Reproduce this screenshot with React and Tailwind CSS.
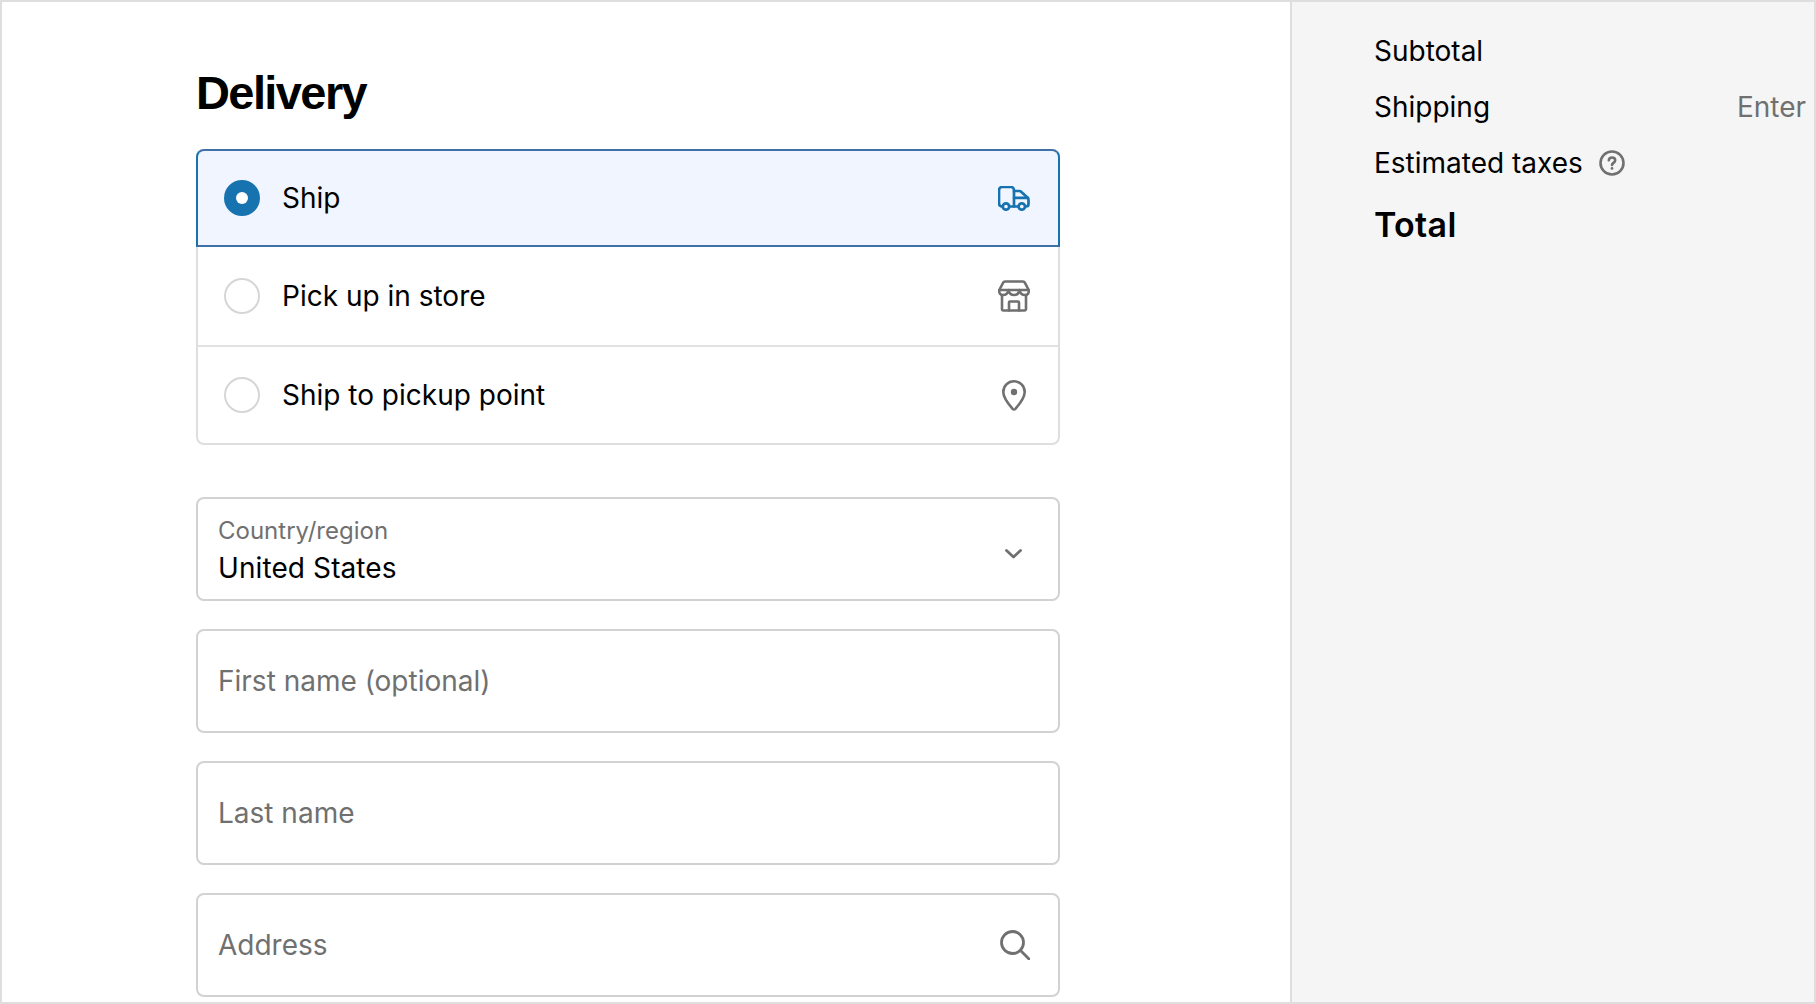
const FONT = "font-['Inter','Liberation_Sans',sans-serif]";

function Truck() {
  return (
    <svg width="32" height="25" viewBox="0 0 32 25" fill="none" stroke="#1773b0" strokeWidth="2.7" strokeLinecap="round" strokeLinejoin="round">
      <path d="M4.8 20.5H4a3 3 0 0 1-3-3V4a3 3 0 0 1 3-3h9a3 3 0 0 1 3 3v16.5h-4.8" />
      <path d="M16 5h5.2a3 3 0 0 1 2.2 1l6 5.6a3 3 0 0 1 1.1 2.3V18a2.5 2.5 0 0 1-2.5 2.5" />
      <path d="M16 20.5h4.5M16 11.8h14" />
      <circle cx="8" cy="20.5" r="3.2" />
      <circle cx="23.8" cy="20.5" r="3.2" />
    </svg>
  );
}

function Store() {
  return (
    <svg width="32" height="32" viewBox="0 0 32 32" fill="none" stroke="#707070" strokeWidth="2.6" strokeLinecap="round" strokeLinejoin="round">
      <path d="M7 1.5H25a2 2 0 0 1 1.800 1.100L30.700 10c.5 3-1 5-3.700 5-2.800 0-5-2-5.500-5-.5 3-2.700 5-5.500 5s-5-2-5.500-5c-.5 3-2.700 5-5.500 5-2.700 0-4.200-2-3.700-5L5.200 2.600A2 2 0 0 1 7 1.500Z" />
      <path d="M1.500 10h29" />
      <path d="M4 15.500V29a1.500 1.500 0 0 0 1.500 1.500h21A1.500 1.500 0 0 0 28 29V15.500" />
      <path d="M11 30.500V22.500a1 1 0 0 1 1-1h8a1 1 0 0 1 1 1v8" />
    </svg>
  );
}

function Pin() {
  return (
    <svg width="24" height="31" viewBox="0 0 24 31" fill="none" stroke="#707070" strokeWidth="2.6" strokeLinejoin="round">
      <path d="M12 1.3C6 1.3 1.3 6 1.3 12c0 6.2 5.6 12.6 9.3 16.9a1.9 1.9 0 0 0 2.8 0C17.1 24.6 22.7 18.2 22.7 12 22.7 6 18 1.3 12 1.3Z" />
      <circle cx="12" cy="12" r="3.2" fill="#707070" stroke="none" />
    </svg>
  );
}

function Chevron() {
  return (
    <svg width="17" height="10" viewBox="0 0 17 10" fill="none" stroke="#707070" strokeWidth="2.8" strokeLinecap="round" strokeLinejoin="round">
      <path d="M1.5 1.5 8.5 8l7-6.5" />
    </svg>
  );
}

function Search() {
  return (
    <svg width="30" height="30" viewBox="0 0 30 30" fill="none" stroke="#707070" strokeWidth="2.8" strokeLinecap="round">
      <circle cx="12.5" cy="12.5" r="11" />
      <path d="m21 21 8 8" />
    </svg>
  );
}

function Help() {
  return (
    <svg width="26" height="26" viewBox="0 0 26 26" fill="none" stroke="#707070" strokeWidth="2.6" strokeLinecap="round">
      <circle cx="13" cy="13" r="11.5" />
      <path d="M9.8 10.3c.2-1.8 1.5-2.8 3.2-2.8 1.8 0 3.2 1.1 3.2 2.8 0 2.5-3.2 2.6-3.2 4.7" />
      <circle cx="13" cy="18.4" r="1.4" fill="#707070" stroke="none" />
    </svg>
  );
}

function Radio({ checked }) {
  if (checked) {
    return (
      <span className="flex h-9 w-9 items-center justify-center rounded-full bg-[#1773b0]">
        <span className="h-3 w-3 rounded-full bg-white" />
      </span>
    );
  }
  return <span className="h-9 w-9 rounded-full border-2 border-[#d6d6d6] bg-white" />;
}

function Option({ label, icon, checked, className }) {
  return (
    <div className={`flex items-center pl-[26px] pr-[28px] ${className}`}>
      <Radio checked={checked} />
      <span className="ml-[22px] flex-1 text-[28px] leading-none text-black">{label}</span>
      <span className="flex w-8 justify-center">{icon}</span>
    </div>
  );
}

function Field({ label, icon }) {
  return (
    <div className="flex h-[104px] items-center justify-between rounded-lg border-2 border-[#d2d2d2] pl-[20px] pr-[28px]">
      <span className="text-[28px] leading-none text-[#707070]">{label}</span>
      {icon}
    </div>
  );
}

export default function App() {
  return (
    <div className={`flex h-screen w-full overflow-hidden border-2 border-[#dedede] bg-white ${FONT}`}>
      <main className="w-[1288px] shrink-0 pl-[194px] pr-[230px]">
        <h1 className="mt-[63px] mb-[28px] h-[56px] font-['Liberation_Sans',sans-serif] text-[47px] font-bold leading-[56px] tracking-[-1.6px] text-black">Delivery</h1>

        <div className="relative flex flex-col rounded-lg border-2 border-[#dedede]">
          <Option
            label="Ship"
            checked
            icon={<Truck />}
            className="-m-[2px] h-[98px] rounded-t-lg border-2 border-[#1773b0] border-t-[#3f70a6] border-b-[#3f70a6] bg-[#f0f5ff]"
          />
          <Option label="Pick up in store" icon={<Store />} className="mt-[2px] h-[100px] border-b-2 border-[#e2e2e2]" />
          <Option label="Ship to pickup point" icon={<Pin />} className="h-[96px]" />
        </div>

        <div className="mt-[52px] flex flex-col gap-[28px]">
          <div className="flex h-[104px] items-center justify-between rounded-lg border-2 border-[#d2d2d2] pl-[20px] pr-[36px]">
            <div className="flex flex-col pt-[3px]">
              <span className="mb-[2px] text-[24px] leading-[33px] text-[#707070]">Country/region</span>
              <span className="text-[28px] leading-[39px] tracking-[0.1px] text-black">United States</span>
            </div>
            <span className="mt-[10px]"><Chevron /></span>
          </div>
          <Field label="First name (optional)" />
          <Field label="Last name" />
          <Field label="Address" icon={<Search />} />
        </div>
      </main>

      <aside className="flex flex-1 flex-col border-l-2 border-[#dedede] bg-[#f5f5f5] pl-[82px] pr-[8px] pt-[21px] text-[28px] text-black">
        <div className="flex h-[56px] items-center">Subtotal</div>
        <div className="flex h-[56px] items-center justify-between">
          <span>Shipping</span>
          <span className="text-[#707070]">Enter</span>
        </div>
        <div className="flex h-[56px] items-center gap-[16px]">
          <span>Estimated taxes</span>
          <Help />
        </div>
        <div className="flex h-[66px] items-center text-[34px] font-semibold tracking-[0.3px]">Total</div>
      </aside>
    </div>
  );
}
